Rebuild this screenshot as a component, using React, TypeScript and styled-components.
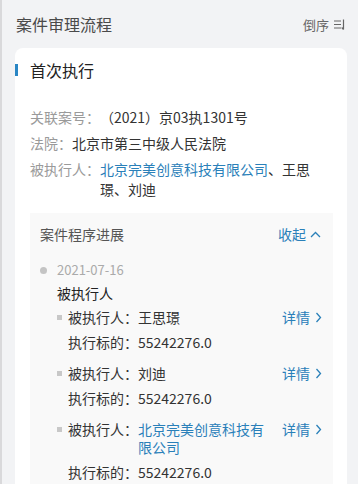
import React from "react";
import styled, { createGlobalStyle } from "styled-components";

const Global = createGlobalStyle`
  html, body { margin: 0; padding: 0; background: #f2f3f5; }
  body { font-family: "Noto Sans CJK SC", "Noto Sans", sans-serif; }
`;

const Page = styled.div`
  min-height: 484px;
  border-left: 2px solid #d9d9db;
  box-sizing: border-box;
  overflow: hidden;
`;

const Header = styled.div`
  height: 48px;
  display: flex;
  align-items: center;
  justify-content: space-between;
  padding: 0 12px 0 14px;
`;

const HeaderTitle = styled.div`
  font-size: 16px;
  color: #4a4a4a;
`;

const SortBtn = styled.div`
  display: flex;
  align-items: center;
  gap: 4px;
  font-size: 13px;
  color: #666;
`;

const Card = styled.div`
  margin: 0 11px 0 13px;
  background: #fff;
  border-radius: 8px 8px 0 0;
  padding: 11px 0 0 0;
  min-height: 440px;
`;

const SectionTitle = styled.div`
  display: flex;
  align-items: center;
  gap: 12px;
  font-size: 16px;
  line-height: 22px;
  color: #222;
`;

const Bar = styled.span`
  width: 3px;
  height: 12px;
  background: #2a86c4;
`;

const Info = styled.div`
  display: flex;
  flex-direction: column;
  gap: 6px;
  padding: 26px 26px 0 15px;
`;

const InfoRow = styled.div`
  display: flex;
  font-size: 14px;
  line-height: 20px;
  color: #333;
`;

const Label = styled.span`
  flex-shrink: 0;
  color: #9a9a9a;
`;

const Value = styled.span`
  flex: 1;
`;

const Link = styled.span`
  color: #2a80b9;
`;

const Panel = styled.div`
  margin: 14px 14px 0 15px;
  background: #f9f9f9;
  padding: 11px 10px 0 10px;
  min-height: 280px;
`;

const PanelHead = styled.div`
  display: flex;
  justify-content: space-between;
  align-items: center;
  font-size: 14px;
  line-height: 20px;
  color: #555;
`;

const Toggle = styled.div`
  display: flex;
  align-items: center;
  gap: 4px;
  color: #2a80b9;
  padding-right: 2px;
`;

const Event = styled.div`
  padding: 17px 0 0 17px;
  position: relative;
`;

const Dot = styled.span`
  position: absolute;
  left: 0;
  top: 23px;
  width: 7px;
  height: 7px;
  border-radius: 50%;
  background: #c4c4c4;
`;

const DateText = styled.div`
  font-size: 13px;
  line-height: 18px;
  color: #aaa;
`;

const EventTitle = styled.div`
  font-size: 14px;
  line-height: 20px;
  color: #222;
  margin-top: 4px;
`;

const Items = styled.div`
  display: flex;
  flex-direction: column;
  gap: 13px;
  margin-top: 5px;
`;

const Item = styled.div`
  display: flex;
  flex-direction: column;
  gap: 7px;
`;

const ItemRow = styled.div<{ $indent?: boolean }>`
  display: flex;
  align-items: flex-start;
  font-size: 14px;
  line-height: 18px;
  color: #333;
  padding-left: ${(p) => (p.$indent ? "11px" : "0")};
`;

const Bullet = styled.span`
  width: 5px;
  height: 5px;
  background: #c8c8c8;
  margin: 7px 6px 0 0;
  flex-shrink: 0;
`;

const ItemLabel = styled.span`
  flex-shrink: 0;
`;

const ItemValue = styled.span`
  flex: 1;
`;

const Detail = styled.span`
  flex-shrink: 0;
  margin-left: 14px;
  display: flex;
  align-items: center;
  gap: 5px;
  color: #2a80b9;
  padding-right: 1px;
`;

const SortIcon = () => (
  <svg width="13" height="13" viewBox="0 0 13 13" fill="none" stroke="#666" strokeWidth="1.2">
    <path d="M1 3h7M1 6.5h7M1 10h7" />
    <path d="M10.5 1.5v10M10.5 11.5l-1.8-2" />
  </svg>
);

const ChevronUp = () => (
  <svg width="11" height="7" viewBox="0 0 11 7" fill="none" stroke="#2a80b9" strokeWidth="1.3">
    <path d="M1 6l4.5-4.5L10 6" />
  </svg>
);

const ChevronRight = () => (
  <svg width="7" height="11" viewBox="0 0 7 11" fill="none" stroke="#2a80b9" strokeWidth="1.3">
    <path d="M1.5 1l4 4.5-4 4.5" />
  </svg>
);

const items = [
  { name: "王思璟", link: false, amount: "55242276.0" },
  { name: "刘迪", link: false, amount: "55242276.0" },
  { name: "北京完美创意科技有限公司", link: true, amount: "55242276.0" },
];

export default function App() {
  return (
    <Page>
      <Global />
      <Header>
        <HeaderTitle>案件审理流程</HeaderTitle>
        <SortBtn>
          倒序
          <SortIcon />
        </SortBtn>
      </Header>
      <Card>
        <SectionTitle>
          <Bar />
          首次执行
        </SectionTitle>
        <Info>
          <InfoRow>
            <Label>关联案号：</Label>
            <Value>（2021）京03执1301号</Value>
          </InfoRow>
          <InfoRow>
            <Label>法院：</Label>
            <Value>北京市第三中级人民法院</Value>
          </InfoRow>
          <InfoRow>
            <Label>被执行人：</Label>
            <Value>
              <Link>北京完美创意科技有限公司</Link>、王思璟、刘迪
            </Value>
          </InfoRow>
        </Info>
        <Panel>
          <PanelHead>
            案件程序进展
            <Toggle>
              收起
              <ChevronUp />
            </Toggle>
          </PanelHead>
          <Event>
            <Dot />
            <DateText>2021-07-16</DateText>
            <EventTitle>被执行人</EventTitle>
            <Items>
              {items.map((it, i) => (
                <Item key={i}>
                  <ItemRow>
                    <Bullet />
                    <ItemLabel>被执行人：</ItemLabel>
                    <ItemValue>{it.link ? <Link>{it.name}</Link> : it.name}</ItemValue>
                    <Detail>
                      详情
                      <ChevronRight />
                    </Detail>
                  </ItemRow>
                  <ItemRow $indent>
                    <ItemLabel>执行标的：</ItemLabel>
                    <ItemValue>{it.amount}</ItemValue>
                  </ItemRow>
                </Item>
              ))}
            </Items>
          </Event>
        </Panel>
      </Card>
    </Page>
  );
}
